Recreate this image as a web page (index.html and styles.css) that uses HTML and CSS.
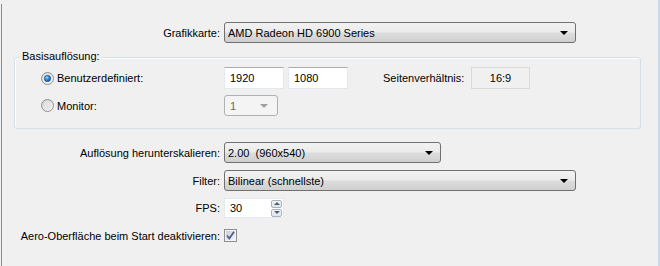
FILE: index.html
```html
<!DOCTYPE html>
<html lang="de">
<head>
    <meta charset="UTF-8">
    <title>Anzeigeeinstellungen</title>
    <link rel="stylesheet" href="styles.css">
</head>
<body>

    <div class="window">
        <div class="frame">

            <div class="row">
                <span class="label">Grafikkarte:</span>
                <div class="combo combo-wide">
                    <span>AMD Radeon HD 6900 Series</span>
                    <i class="arrow"></i>
                </div>
            </div>

            <div class="group">
                <span class="group-title">Basisauflösung:</span>
                <div class="group-row">
                    <div class="option">
                        <svg class="radio" width="13" height="13" viewBox="0 0 13 13">
                            <defs>
                                <linearGradient id="rb" x1="0" y1="0" x2="1" y2="1">
                                    <stop offset="0" stop-color="#d8d8d8"/>
                                    <stop offset="1" stop-color="#fbfbfb"/>
                                </linearGradient>
                                <radialGradient id="dot" cx="0.4" cy="0.35" r="0.7">
                                    <stop offset="0" stop-color="#9fd8ff"/>
                                    <stop offset="0.5" stop-color="#2a85d0"/>
                                    <stop offset="1" stop-color="#0d4c8c"/>
                                </radialGradient>
                            </defs>
                            <circle cx="6.5" cy="6.5" r="6" fill="url(#rb)" stroke="#8e8f8f"/>
                            <circle cx="6.5" cy="6.5" r="3.2" fill="url(#dot)" stroke="#1d5383" stroke-width="0.6"/>
                        </svg>
                        <span>Benutzerdefiniert:</span>
                    </div>
                    <div class="field">1920</div>
                    <div class="field">1080</div>
                    <span class="ratio-label">Seitenverhältnis:</span>
                    <div class="ratio">16:9</div>
                </div>
                <div class="group-row">
                    <div class="option">
                        <svg class="radio" width="13" height="13" viewBox="0 0 13 13">
                            <defs>
                                <linearGradient id="rb2" x1="0" y1="0" x2="1" y2="1">
                                    <stop offset="0" stop-color="#cfcfcf"/>
                                    <stop offset="1" stop-color="#fbfbfb"/>
                                </linearGradient>
                            </defs>
                            <circle cx="6.5" cy="6.5" r="6" fill="url(#rb2)" stroke="#8e8f8f"/>
                            <circle cx="6.5" cy="6.5" r="3.5" fill="#e4e4e4"/>
                        </svg>
                        <span>Monitor:</span>
                    </div>
                    <div class="combo combo-small disabled">
                        <span>1</span>
                        <i class="arrow"></i>
                    </div>
                </div>
            </div>

            <div class="row row-scale">
                <span class="label">Auflösung herunterskalieren:</span>
                <div class="combo combo-mid">
                    <span>2.00&nbsp; (960x540)</span>
                    <i class="arrow"></i>
                </div>
            </div>

            <div class="row row-filter">
                <span class="label">Filter:</span>
                <div class="combo combo-wide">
                    <span>Bilinear (schnellste)</span>
                    <i class="arrow"></i>
                </div>
            </div>

            <div class="row row-fps">
                <span class="label">FPS:</span>
                <div class="spin">
                    <span>30</span>
                    <div class="spin-buttons">
                        <div class="spin-btn"><i class="tri-up"></i></div>
                        <div class="spin-btn"><i class="tri-down"></i></div>
                    </div>
                </div>
            </div>

            <div class="row row-aero">
                <span class="label">Aero-Oberfläche beim Start deaktivieren:</span>
                <svg class="check" width="13" height="13" viewBox="0 0 13 13">
                    <defs>
                        <linearGradient id="cb" x1="0" y1="0" x2="1" y2="1">
                            <stop offset="0" stop-color="#cbcfd5"/>
                            <stop offset="1" stop-color="#f6f6f6"/>
                        </linearGradient>
                    </defs>
                    <rect x="0.5" y="0.5" width="12" height="12" fill="#f4f4f4" stroke="#8e8f8f"/>
                    <rect x="2" y="2" width="9" height="9" fill="url(#cb)"/>
                    <path d="M3 6.5 L5.3 9.5 L10 2.8" fill="none" stroke="#4a5f97" stroke-width="1.8"/>
                </svg>
            </div>

        </div>
    </div>

</body>
</html>
```

FILE: styles.css
```css
/* Windows 7 style settings panel */
* {
    box-sizing: border-box;
}

body {
    margin: 0;
    background: #f0f0f0;
    font-family: 'Liberation Sans', Arial, sans-serif;
    font-size: 11px;
    color: #000;
}

.window {
    width: 660px;
    height: 266px;
    padding-top: 4px;
    border-right: 2px solid #c5d8ee;
    overflow: hidden;
}

.frame {
    margin-left: 1px;
    height: 262px;
    padding-top: 18px;
    border-left: 1px solid #8d8d8d;
}

/* label | control rows */
.row {
    display: grid;
    grid-template-columns: 218px auto;
    column-gap: 4px;
    align-items: center;
    justify-items: start;
}

.label {
    justify-self: end;
    white-space: nowrap;
}

.row-scale {
    margin-top: 13px;
}

.row-filter {
    margin-top: 7px;
}

.row-fps {
    margin-top: 7px;
}

.row-aero {
    margin-top: 11px;
}

/* combo boxes */
.combo {
    height: 21px;
    display: flex;
    align-items: center;
    justify-content: space-between;
    padding: 0 7px 0 3px;
    border: 1px solid #707070;
    border-radius: 3px;
    background: linear-gradient(#f2f2f2 0%, #ebebeb 48%, #dddddd 52%, #cfcfcf 100%);
    white-space: nowrap;
}

.combo-wide {
    width: 352px;
}

.combo-mid {
    width: 217px;
}

.combo-small {
    width: 54px;
    height: 21px;
}

.arrow {
    width: 0;
    height: 0;
    border-left: 4px solid transparent;
    border-right: 4px solid transparent;
    border-top: 4px solid #000;
    margin-top: 1px;
}

.combo.disabled {
    background: #f4f4f4;
    border-color: #adb2b5;
    color: #6d6d6d;
    padding-left: 5px;
}

.combo.disabled .arrow {
    border-top-color: #a0a0a0;
    margin-right: 2px;
}

/* group box */
.group {
    position: relative;
    width: 627px;
    margin: 14px 0 0 12px;
    padding: 9px 0 12px 26px;
    border: 1px solid #d5dfe5;
    border-radius: 3px;
    box-shadow: inset 1px 1px 0 #fff;
}

.group-title {
    position: absolute;
    top: -8px;
    left: 5px;
    padding: 0 2px;
    background: #f0f0f0;
}

.group-row {
    display: flex;
    align-items: center;
    gap: 4px;
}

.group-row + .group-row {
    margin-top: 6px;
}

.option {
    width: 179px;
    display: flex;
    align-items: center;
    gap: 3px;
}

.radio {
    display: block;
}

.field {
    width: 60px;
    height: 22px;
    display: flex;
    align-items: center;
    padding-left: 5px;
    background: #fff;
    border: 1px solid #e3e9ef;
    border-top-color: #abadb3;
}

.ratio-label {
    width: 84px;
    margin-left: 31px;
}

.ratio {
    width: 59px;
    height: 22px;
    display: flex;
    align-items: center;
    justify-content: center;
    border: 1px solid #dadada;
    background: #f0f0f0;
}

/* spin box */
.spin {
    width: 60px;
    height: 20px;
    display: flex;
    align-items: center;
    justify-content: space-between;
    padding: 0 1px 0 5px;
    background: #fff;
    border: 1px solid #e3e9ef;
}

.spin-buttons {
    display: flex;
    flex-direction: column;
    gap: 1px;
}

.spin-btn {
    width: 11px;
    height: 8px;
    display: flex;
    align-items: center;
    justify-content: center;
    border: 1px solid #a8b3c0;
    border-radius: 2px;
    background: linear-gradient(#f4f6f8, #dfe4ea);
}

.tri-up {
    border-left: 3px solid transparent;
    border-right: 3px solid transparent;
    border-bottom: 3px solid #4d5e74;
}

.tri-down {
    border-left: 3px solid transparent;
    border-right: 3px solid transparent;
    border-top: 3px solid #4d5e74;
}

.check {
    display: block;
}
```
